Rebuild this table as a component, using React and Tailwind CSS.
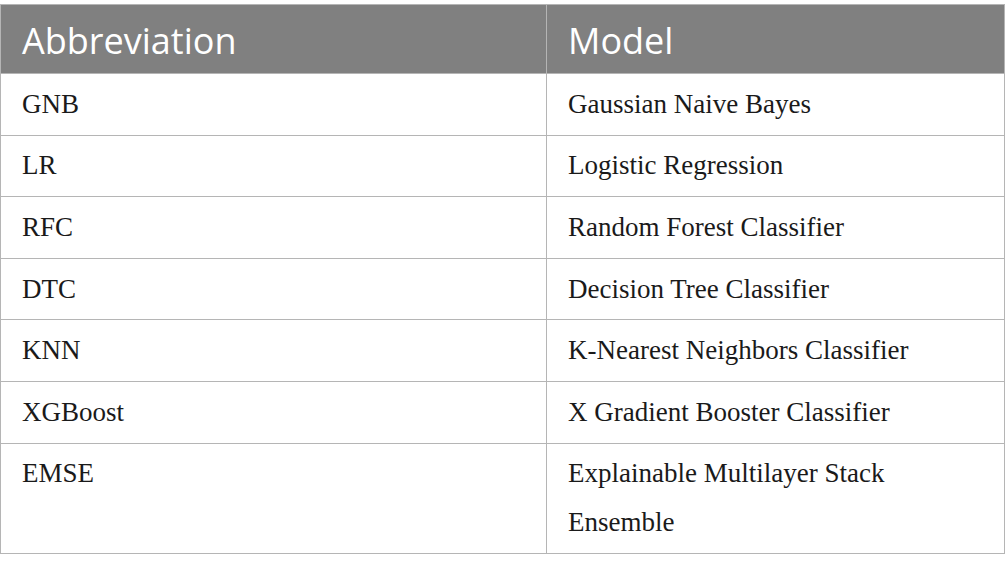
import React from "react";

const ROWS = [
  ["GNB", "Gaussian Naive Bayes"],
  ["LR", "Logistic Regression"],
  ["RFC", "Random Forest Classifier"],
  ["DTC", "Decision Tree Classifier"],
  ["KNN", "K-Nearest Neighbors Classifier"],
  ["XGBoost", "X Gradient Booster Classifier"],
  ["EMSE", "Explainable Multilayer Stack Ensemble"],
];

export default function App() {
  return (
    <div className="w-[1005px] h-[571px] bg-white pt-[4px]">
      <table className="w-[1005px] border-collapse table-fixed">
        <colgroup>
          <col className="w-[546px]" />
          <col />
        </colgroup>
        <thead>
          <tr className="bg-[#808080]">
            <th className="h-[69px] border border-[#b5b5b5] px-[21px] pt-[3px] text-left align-middle font-normal text-white text-[36px] leading-[40px] font-['Open_Sans',sans-serif]">
              Abbreviation
            </th>
            <th className="h-[69px] border border-[#b5b5b5] px-[21px] pt-[3px] text-left align-middle font-normal text-white text-[36px] leading-[40px] font-['Open_Sans',sans-serif]">
              Model
            </th>
          </tr>
        </thead>
        <tbody>
          {ROWS.map(([abbr, model]) => (
            <tr key={abbr}>
              <td className="border border-[#b5b5b5] px-[21px] py-[5.8px] align-top text-[#1a1a1a] text-[27px] leading-[49px] font-['Liberation_Serif',serif]">
                {abbr}
              </td>
              <td className="border border-[#b5b5b5] px-[21px] py-[5.8px] pr-[90px] align-top text-[#1a1a1a] text-[27px] leading-[49px] font-['Liberation_Serif',serif]">
                {model}
              </td>
            </tr>
          ))}
        </tbody>
      </table>
    </div>
  );
}
